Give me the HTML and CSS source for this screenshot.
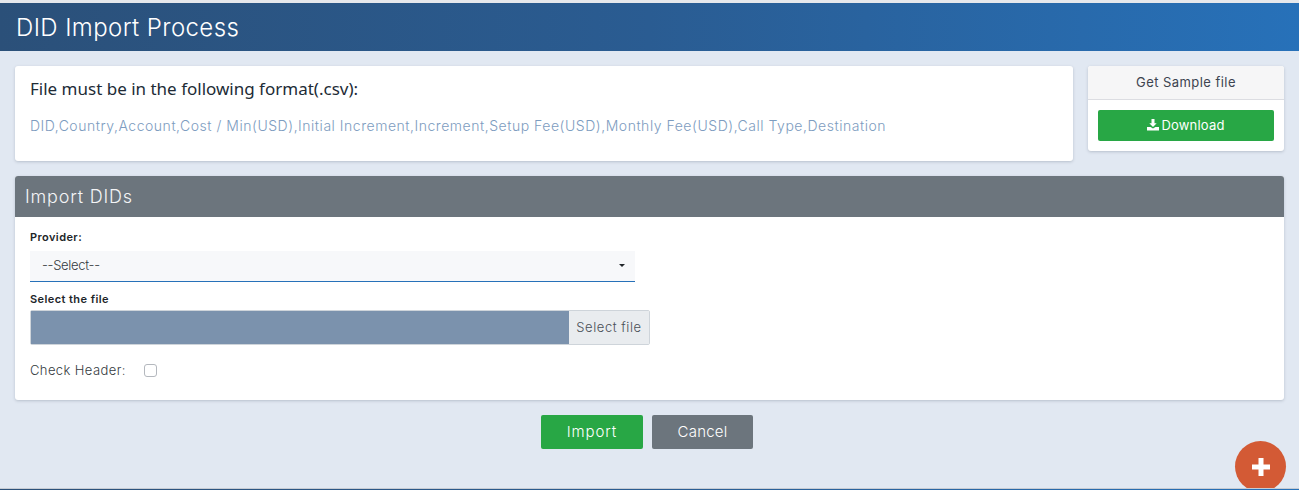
FILE: index.html
```html
<!DOCTYPE html>
<html lang="en">
<head>
    <meta charset="UTF-8">
    <meta name="viewport" content="width=device-width, initial-scale=1.0">
    <title>DID Import Process</title>
    <link rel="stylesheet" href="styles.css">
</head>
<body>
    <header class="page-head">
        <h1>DID Import Process</h1>
    </header>

    <main class="content">
        <div class="top-row">
            <section class="card format-card">
                <h2>File must be in the following format(.csv):</h2>
                <p>DID,Country,Account,Cost / Min(USD),Initial Increment,Increment,Setup Fee(USD),Monthly Fee(USD),Call Type,Destination</p>
            </section>
            <section class="card sample-card">
                <div class="sample-head">Get Sample file</div>
                <div class="sample-body">
                    <button class="btn btn-green btn-download">
                        <svg class="icon" viewBox="0 0 12 12" width="12" height="12"><path fill="currentColor" d="M4.500 0h3v4.200h2.200L6 8 2.300 4.200h2.200zM0 8h3.600L6 9.500 8.400 8H12v3.500H0z"/></svg>
                        Download
                    </button>
                </div>
            </section>
        </div>

        <section class="card import-card">
            <div class="import-head">Import DIDs</div>
            <form class="import-form">
                <label class="field-label label-provider">Provider:</label>
                <div class="select-box">
                    <span>--Select--</span>
                    <i class="caret"></i>
                </div>
                <label class="field-label label-file">Select the file</label>
                <div class="file-box">
                    <div class="file-name"></div>
                    <div class="file-btn">Select file</div>
                </div>
                <div class="check-row">
                    <label>Check Header:</label>
                    <input type="checkbox" class="check">
                </div>
            </form>
        </section>

        <div class="actions">
            <button class="btn btn-green btn-action btn-import">Import</button>
            <button class="btn btn-gray btn-action">Cancel</button>
        </div>
    </main>

    <button class="fab">
        <svg viewBox="0 0 20 20" width="20" height="20"><path fill="#fff" d="M7.500 1h5v6.500H19v5h-6.500V19h-5v-6.500H1v-5h6.500z"/></svg>
    </button>
    <div class="bottom-line"></div>
</body>
</html>
```

FILE: styles.css
```css
*{
    box-sizing: border-box;
}

html,body{
    height: 100%;
}

body{
    margin: 0;
    position: relative;
    overflow: hidden;
    background-color: #e1e8f2;
    font-family: "Inter", "Open Sans", sans-serif;
    color: #212529;
}

.page-head{
    height: 51px;
    border-top: 3px solid #e6e8ec;
    background: linear-gradient(90deg, #2b5079 0%, #2a5c92 50%, #2771b9 100%);
    padding: 1px 16px 0;
    display: flex;
    align-items: center;
}

.page-head h1{
    margin: 0;
    color: #fff;
    font-size: 24px;
    font-weight: 300;
    letter-spacing: 0.4px;
}

.content{
    padding: 15px 15px 0;
}

.top-row{
    display: flex;
    align-items: flex-start;
    gap: 15px;
}

.card{
    background: #fff;
    border-radius: 3px;
    box-shadow: 0 1px 3px rgba(60,70,90,0.25);
}

.format-card{
    width: 1058px;
    height: 95px;
    padding: 13px 15px;
}

.format-card h2{
    margin: 0;
    font-family: "Noto Sans", sans-serif;
    font-size: 17px;
    font-weight: 400;
    line-height: 20px;
    color: #212b36;
}

.format-card p{
    margin: 17px 0 0;
    font-size: 14px;
    line-height: 20px;
    font-weight: 300;
    color: #7d9cc0;
    letter-spacing: 0.53px;
}

.sample-card{
    width: 196px;
    height: 85px;
}

.sample-head{
    height: 34px;
    background: #f6f6f7;
    border-bottom: 1px solid #dcdde2;
    border-radius: 3px 3px 0 0;
    text-align: center;
    font-size: 13px;
    line-height: 33px;
    letter-spacing: 0.45px;
    color: #3d4450;
}

.sample-body{
    padding: 10px;
}

.btn{
    border: 0;
    border-radius: 2px;
    color: #fff;
    font-family: inherit;
    cursor: pointer;
}

.btn-green{
    background: #28a745;
}

.btn-gray{
    background: #6c757d;
}

.btn-download{
    width: 100%;
    height: 31px;
    padding: 0 0 2px;
    font-size: 13px;
    letter-spacing: 0.2px;
    display: flex;
    align-items: center;
    justify-content: center;
    gap: 2px;
}

.import-card{
    margin-top: 15px;
    height: 224px;
}

.import-head{
    height: 41px;
    padding: 1px 10px 0;
    background: #6c757d;
    border-radius: 3px 3px 0 0;
    color: #f3f4f6;
    font-size: 18px;
    font-weight: 300;
    line-height: 40px;
    letter-spacing: 0.8px;
}

.import-form{
    padding: 13px 15px 0;
}

.field-label{
    display: block;
    font-size: 11px;
    font-weight: 600;
    line-height: 14px;
    letter-spacing: 0.42px;
    color: #212529;
}

.label-provider{
    margin-bottom: 7px;
}

.select-box{
    width: 605px;
    height: 31px;
    padding: 0 12px 2px;
    background: #f7f8fa;
    border-bottom: 1px solid #2771b9;
    display: flex;
    align-items: center;
    justify-content: space-between;
    font-size: 13px;
    font-weight: 300;
    letter-spacing: -0.3px;
    color: #343a40;
}

.caret{
    width: 0;
    height: 0;
    margin-right: -2px;
    border-left: 3px solid transparent;
    border-right: 3px solid transparent;
    border-top: 3px solid #212529;
}

.label-file{
    margin-top: 10px;
    margin-bottom: 4px;
}

.file-box{
    width: 620px;
    height: 35px;
    display: flex;
    border: 1px solid #ced4da;
    border-radius: 2px;
}

.file-name{
    flex: 1;
    background: #7b92ad;
}

.file-btn{
    width: 80px;
    background: #e9ecef;
    text-align: center;
    font-size: 13px;
    font-weight: 300;
    line-height: 33px;
    letter-spacing: 0.55px;
    color: #495057;
}

.check-row{
    margin-top: 16px;
    display: flex;
    align-items: center;
    gap: 18px;
    font-size: 13px;
    font-weight: 300;
    line-height: 18px;
    letter-spacing: 0.4px;
    color: #343a40;
}

.check{
    appearance: none;
    width: 13px;
    height: 13px;
    margin: 0;
    background: #fff;
    border: 1px solid #b4b8be;
    border-radius: 3px;
}

.actions{
    margin-top: 15px;
    padding: 0 5px 2px 0;
    display: flex;
    justify-content: center;
    gap: 9px;
}

.btn-action{
    height: 34px;
    padding: 0 0 2px;
    font-size: 15px;
    font-weight: 300;
    letter-spacing: 0.2px;
}

.btn-action.btn-green{
    width: 102px;
}

.btn-action.btn-gray{
    width: 101px;
}

.btn-action.btn-import{
    letter-spacing: 0.9px;
}

.fab{
    position: absolute;
    left: 1235px;
    top: 441px;
    width: 51px;
    height: 51px;
    padding: 0;
    border: 0;
    border-radius: 50%;
    background: #d35a35;
    display: flex;
    align-items: center;
    justify-content: center;
}

.bottom-line{
    position: absolute;
    left: 0;
    right: 0;
    bottom: 0;
    height: 2px;
    border-top: 1px solid #c6cbd3;
    background: linear-gradient(90deg, #2b5079 0%, #2a5c92 50%, #2771b9 100%);
}
```
